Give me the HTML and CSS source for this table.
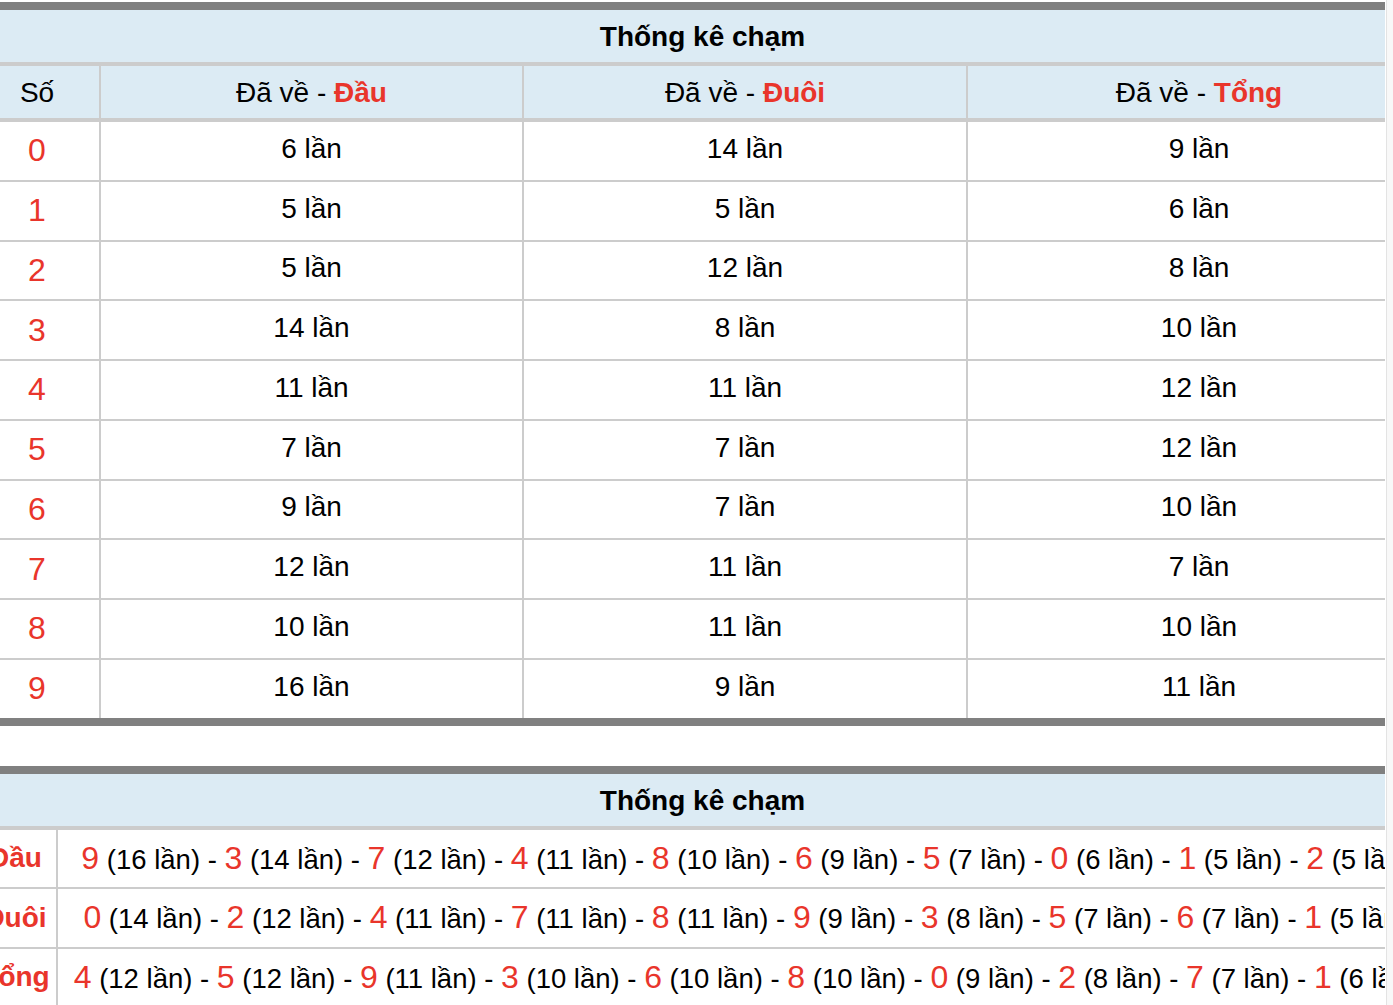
FILE: index.html
```html
<!DOCTYPE html>
<html lang="vi">
<head>
<meta charset="utf-8">
<title>Thống kê chạm</title>
<link rel="stylesheet" href="styles.css">
</head>
<body>
<div class="page">
  <main class="main">
    <div class="inner">
      <section class="stat">
        <div class="title">Thống kê chạm</div>
        <div class="row head">
          <div class="cell"><span>Số</span></div>
          <div class="cell"><span>Đã về - <b class="red">Đầu</b></span></div>
          <div class="cell"><span>Đã về - <b class="red">Đuôi</b></span></div>
          <div class="cell"><span>Đã về - <b class="red">Tổng</b></span></div>
        </div>
        <div class="row"><div class="cell num">0</div><div class="cell val">6 lần</div><div class="cell val">14 lần</div><div class="cell val">9 lần</div></div>
        <div class="row"><div class="cell num">1</div><div class="cell val">5 lần</div><div class="cell val">5 lần</div><div class="cell val">6 lần</div></div>
        <div class="row"><div class="cell num">2</div><div class="cell val">5 lần</div><div class="cell val">12 lần</div><div class="cell val">8 lần</div></div>
        <div class="row"><div class="cell num">3</div><div class="cell val">14 lần</div><div class="cell val">8 lần</div><div class="cell val">10 lần</div></div>
        <div class="row"><div class="cell num">4</div><div class="cell val">11 lần</div><div class="cell val">11 lần</div><div class="cell val">12 lần</div></div>
        <div class="row"><div class="cell num">5</div><div class="cell val">7 lần</div><div class="cell val">7 lần</div><div class="cell val">12 lần</div></div>
        <div class="row"><div class="cell num">6</div><div class="cell val">9 lần</div><div class="cell val">7 lần</div><div class="cell val">10 lần</div></div>
        <div class="row"><div class="cell num">7</div><div class="cell val">12 lần</div><div class="cell val">11 lần</div><div class="cell val">7 lần</div></div>
        <div class="row"><div class="cell num">8</div><div class="cell val">10 lần</div><div class="cell val">11 lần</div><div class="cell val">10 lần</div></div>
        <div class="row"><div class="cell num">9</div><div class="cell val">16 lần</div><div class="cell val">9 lần</div><div class="cell val">11 lần</div></div>
      </section>

      <section class="stat order">
        <div class="title">Thống kê chạm</div>
        <div class="row2">
          <div class="cell label red">Đầu</div>
          <div class="cell list"><span><span class="d">9</span> (16 lần) - <span class="d">3</span> (14 lần) - <span class="d">7</span> (12 lần) - <span class="d">4</span> (11 lần) - <span class="d">8</span> (10 lần) - <span class="d">6</span> (9 lần) - <span class="d">5</span> (7 lần) - <span class="d">0</span> (6 lần) - <span class="d">1</span> (5 lần) - <span class="d">2</span> (5 lần)</span></div>
        </div>
        <div class="row2">
          <div class="cell label red">Đuôi</div>
          <div class="cell list"><span><span class="d">0</span> (14 lần) - <span class="d">2</span> (12 lần) - <span class="d">4</span> (11 lần) - <span class="d">7</span> (11 lần) - <span class="d">8</span> (11 lần) - <span class="d">9</span> (9 lần) - <span class="d">3</span> (8 lần) - <span class="d">5</span> (7 lần) - <span class="d">6</span> (7 lần) - <span class="d">1</span> (5 lần)</span></div>
        </div>
        <div class="row2">
          <div class="cell label red">Tổng</div>
          <div class="cell list"><span><span class="d">4</span> (12 lần) - <span class="d">5</span> (12 lần) - <span class="d">9</span> (11 lần) - <span class="d">3</span> (10 lần) - <span class="d">6</span> (10 lần) - <span class="d">8</span> (10 lần) - <span class="d">0</span> (9 lần) - <span class="d">2</span> (8 lần) - <span class="d">7</span> (7 lần) - <span class="d">1</span> (6 lần)</span></div>
        </div>
      </section>
    </div>
  </main>
  <div class="scrollbar"></div>
</div>
</body>
</html>
```

FILE: styles.css
```css
html, body {
  margin: 0;
  padding: 0;
  background: #ffffff;
}

body {
  font-family: "Liberation Sans", Arial, Helvetica, sans-serif;
  font-size: 28px;
  color: #000000;
}

.page {
  display: flex;
  height: 1005px;
  overflow: hidden;
}

.main {
  width: 1385px;
  flex: none;
  overflow: hidden;
  padding-top: 2px;
}

.inner {
  width: 1455px;
  margin-left: -25px;
}

.scrollbar {
  flex: 1;
  margin-left: 1px;
  border-left: 1px solid #e3e3e3;
  background: #f8f8f8;
}

.red {
  color: #e9352b;
}

b.red {
  font-weight: bold;
}

.stat {
  border-top: 8px solid #808080;
  border-bottom: 8px solid #808080;
}

.stat.order {
  margin-top: 40px;
  border-bottom: none;
}

.title {
  height: 56px;
  box-sizing: border-box;
  padding-top: 2px;
  display: flex;
  align-items: center;
  justify-content: center;
  background: #dcebf4;
  font-weight: bold;
  border-bottom: 4px solid #cccccc;
}

.row {
  display: grid;
  grid-template-columns: 124px 421px 442px 462px;
  column-gap: 2px;
  background: #cccccc;
  height: 57.75px;
  border-bottom: 2px solid #cccccc;
}

.row:last-child {
  border-bottom: none;
}

.row.head {
  height: 52px;
  border-bottom: 4px solid #cccccc;
}

.cell {
  display: flex;
  align-items: center;
  justify-content: center;
  background: #ffffff;
  white-space: nowrap;
}

.row.head .cell {
  background: #dcebf4;
  padding-top: 2px;
}

.val {
  padding-bottom: 4px;
}

.num {
  color: #e9352b;
  font-size: 32px;
}

.row2 {
  display: grid;
  grid-template-columns: 81px 1375px;
  column-gap: 2px;
  background: #cccccc;
  height: 57.5px;
  border-bottom: 2px solid #cccccc;
}

.label {
  font-weight: bold;
}

.list {
  justify-content: center;
  font-size: 27.5px;
}

.d {
  color: #e9352b;
  font-size: 32px;
}
```
